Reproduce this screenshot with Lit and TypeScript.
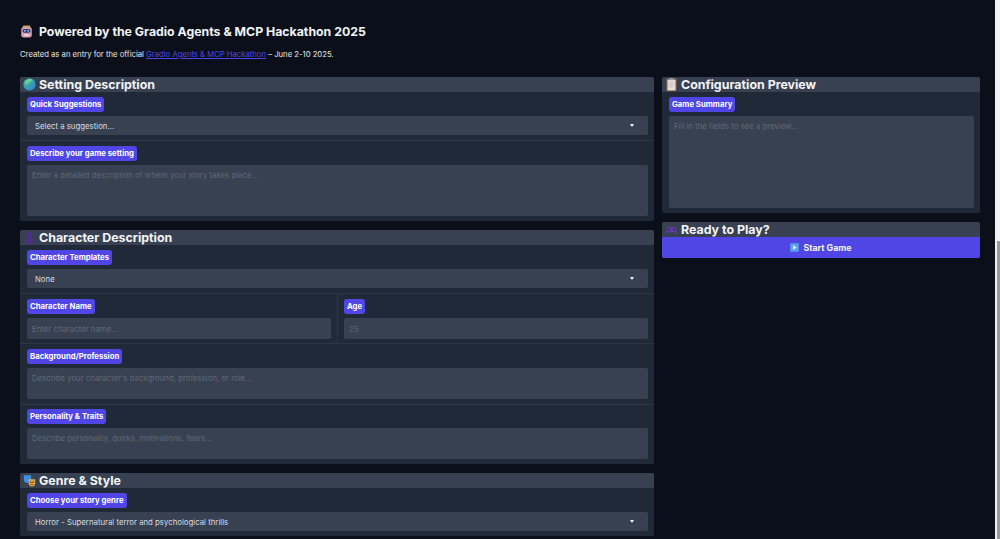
import { LitElement, html, css, svg } from "lit";
import { customElement } from "lit/decorators.js";

const icons: Record<string, unknown> = {
  robot: svg`<rect x="3.5" y="0.5" width="9" height="3" rx="1" fill="#c9a24e"/><rect x="1.5" y="2.5" width="13" height="13" rx="3" fill="#d9a0b4"/><rect x="3" y="5" width="10" height="4.5" rx="2" fill="#2c3a70"/><circle cx="6" cy="7.2" r="1" fill="#cfe4ff"/><circle cx="10" cy="7.2" r="1" fill="#cfe4ff"/><rect x="5" y="11.5" width="6" height="2" fill="#f3d9e2"/>`,
  globe: svg`<defs><linearGradient id="g" x1="0" y1="0" x2="1" y2="1"><stop offset="0" stop-color="#3fc48f"/><stop offset="1" stop-color="#2f7fd8"/></linearGradient></defs><circle cx="8" cy="8" r="7.5" fill="url(#g)"/><path d="M2 5 C5 1 9 0 12 2 C10 5 8 4 7 7 C5 9 3 8 2 5Z" fill="#63cf9a"/>`,
  person: svg`<circle cx="8" cy="3.2" r="2.8" fill="#4c2f8f"/><path d="M4 16 L5 6 H11 L12 16Z" fill="#4c2f8f"/>`,
  masks: svg`<path d="M1 1.5 H10 V7 C10 10 7.5 11 5.5 11 C3 11 1 9.5 1 7Z" fill="#3f8ee0"/><path d="M7 6.5 H15 V11.5 C15 14 13 15.5 11 15.5 C9 15.5 7 14 7 11.5Z" fill="#e0a84a"/><circle cx="9.5" cy="10" r="1" fill="#5a3a10"/><circle cx="12.5" cy="10" r="1" fill="#5a3a10"/><path d="M9.5 12.5 H12.5 V13.5 H9.5Z" fill="#5a3a10"/>`,
  clipboard: svg`<rect x="2" y="1" width="12" height="15" rx="1" fill="#b97850"/><rect x="3.3" y="2.5" width="9.4" height="12.5" fill="#e8dcd6"/><rect x="5.5" y="0" width="5" height="2.5" fill="#8e9aa6"/><path d="M4.5 6h7M4.5 8.5h7M4.5 11h5" stroke="#b8b0b0" stroke-width="0.8"/>`,
  gamepad: svg`<path d="M1 12 L3 5 H13 L15 12 C15 13 13 13 12 11.5 H4 C3 13 1 13 1 12Z" fill="#5b3c9c"/><circle cx="5" cy="7.8" r="1.1" fill="#2e1d5c"/><circle cx="11" cy="7.8" r="1.1" fill="#2e1d5c"/>`,
  play: svg`<rect x="0.5" y="0.5" width="15" height="15" rx="1.5" fill="#5aa2ec"/><path d="M5.5 4 L12 8 L5.5 12Z" fill="#f2f6fb"/>`,
};

const icon = (name: string, size = "i") =>
  html`<svg class=${size} viewBox="0 0 16 16" aria-hidden="true">${icons[name]}</svg>`;

@customElement("app-root")
export class AppRoot extends LitElement {
  static styles = css`
    :host {
      display: flex;
      height: 100vh;
      overflow: hidden;
      background: #0b0f19;
      color: #f3f4f6;
      font-family: "Inter", "Open Sans", sans-serif;
    }
    .page {
      flex: 1;
      min-width: 0;
      padding: 23px 15px 0 20px;
    }
    .bar {
      width: 5px;
      background: #f2f2f2;
      flex: none;
      display: flex;
      flex-direction: column;
      padding: 241px 0 0 2px;
      box-sizing: border-box;
    }
    .thumb {
      flex: 1;
      background: #9a9a9a;
    }
    .title {
      display: flex;
      align-items: center;
      gap: 6px;
      height: 16px;
      margin: 0;
      font-size: 12.3px;
      font-weight: 700;
      white-space: nowrap;
    }
    .sub {
      margin: 9px 0 0;
      height: 13px;
      font-size: 7.7px;
      line-height: 13px;
      color: #e5e7eb;
    }
    .sub a {
      color: #4f46e5;
    }
    .cols {
      display: flex;
      gap: 8px;
      margin-top: 16px;
    }
    .left {
      width: 634px;
      display: flex;
      flex-direction: column;
      gap: 9px;
    }
    .right {
      width: 318px;
      display: flex;
      flex-direction: column;
      gap: 9px;
    }
    .panel {
      background: #1f2937;
      border-radius: 2px;
      overflow: hidden;
    }
    .head {
      display: flex;
      align-items: center;
      gap: 3px;
      height: 15px;
      padding-left: 3px;
      background: #374151;
      font-size: 12.4px;
      font-weight: 700;
      line-height: 15px;
      white-space: nowrap;
    }
    .i {
      width: 13px;
      height: 13px;
      flex: none;
    }
    .s {
      width: 9px;
      height: 9px;
      flex: none;
    }
    .field {
      padding: 5px 6px 5px 7px;
      display: flex;
      flex-direction: column;
      align-items: flex-start;
      gap: 4px;
      border-bottom: 1px solid #2b3646;
    }
    .field.end {
      border-bottom: 0;
    }
    .field.tight {
      padding-top: 4px;
    }
    .label {
      height: 15px;
      padding: 0 3px;
      background: #4f46e5;
      border-radius: 3px;
      font-size: 7.75px;
      font-weight: 700;
      line-height: 15px;
      color: #fff;
      white-space: nowrap;
    }
    .box {
      align-self: stretch;
      box-sizing: border-box;
      background: #374151;
      border-radius: 2px;
      padding: 0 8px;
      font-size: 7.8px;
      color: #5f6977;
    }
    .select {
      height: 19px;
      display: flex;
      align-items: center;
      justify-content: space-between;
      color: #d9dde3;
    }
    .caret {
      width: 0;
      height: 0;
      margin-right: 6px;
      border-left: 2.5px solid transparent;
      border-right: 2.5px solid transparent;
      border-top: 3px solid #f3f4f6;
    }
    .area {
      padding-top: 4px;
      line-height: 12px;
      padding-left: 5px;
    }
    .one {
      height: 21px;
      display: flex;
      align-items: center;
      padding-left: 5px;
    }
    .h51 { height: 51px; }
    .h31 { height: 31px; }
    .h92 { height: 92px; }
    .split {
      display: grid;
      grid-template-columns: 1fr 1fr;
      border-bottom: 1px solid #2b3646;
    }
    .split .field {
      border-bottom: 0;
      padding-bottom: 4px;
    }
    .split .field + .field {
      border-left: 1px solid #2b3646;
      padding-left: 6px;
    }
    .play {
      height: 21px;
      display: flex;
      align-items: center;
      justify-content: center;
      gap: 4px;
      background: #4f46e5;
      font-size: 8.8px;
      font-weight: 700;
      color: #f3f4f6;
    }
  `;

  private select(text: string) {
    return html`<div class="box select"><span>${text}</span><span class="caret"></span></div>`;
  }

  render() {
    return html`
      <div class="page">
        <h2 class="title">${icon("robot")}<span>Powered by the Gradio Agents &amp; MCP Hackathon 2025</span></h2>
        <p class="sub">Created as an entry for the official <a href="#">Gradio Agents &amp; MCP Hackathon</a> – June 2-10 2025.</p>
        <div class="cols">
          <div class="left">
            <section class="panel">
              <div class="head">${icon("globe")}<span>Setting Description</span></div>
              <div class="field">
                <span class="label">Quick Suggestions</span>
                ${this.select("Select a suggestion...")}
              </div>
              <div class="field end">
                <span class="label">Describe your game setting</span>
                <div class="box area h51">Enter a detailed description of where your story takes place...</div>
              </div>
            </section>
            <section class="panel">
              <div class="head">${icon("person")}<span>Character Description</span></div>
              <div class="field">
                <span class="label">Character Templates</span>
                ${this.select("None")}
              </div>
              <div class="split">
                <div class="field">
                  <span class="label">Character Name</span>
                  <div class="box one">Enter character name...</div>
                </div>
                <div class="field">
                  <span class="label">Age</span>
                  <div class="box one">25</div>
                </div>
              </div>
              <div class="field">
                <span class="label">Background/Profession</span>
                <div class="box area h31">Describe your character's background, profession, or role...</div>
              </div>
              <div class="field end tight">
                <span class="label">Personality &amp; Traits</span>
                <div class="box area h31">Describe personality, quirks, motivations, fears...</div>
              </div>
            </section>
            <section class="panel">
              <div class="head">${icon("masks")}<span>Genre &amp; Style</span></div>
              <div class="field end">
                <span class="label">Choose your story genre</span>
                ${this.select("Horror - Supernatural terror and psychological thrills")}
              </div>
            </section>
          </div>
          <div class="right">
            <section class="panel">
              <div class="head">${icon("clipboard")}<span>Configuration Preview</span></div>
              <div class="field end">
                <span class="label">Game Summary</span>
                <div class="box area h92">Fill in the fields to see a preview...</div>
              </div>
            </section>
            <section class="panel">
              <div class="head">${icon("gamepad")}<span>Ready to Play?</span></div>
              <div class="play">${icon("play", "s")}<span>Start Game</span></div>
            </section>
          </div>
        </div>
      </div>
      <div class="bar"><div class="thumb"></div></div>
    `;
  }
}
